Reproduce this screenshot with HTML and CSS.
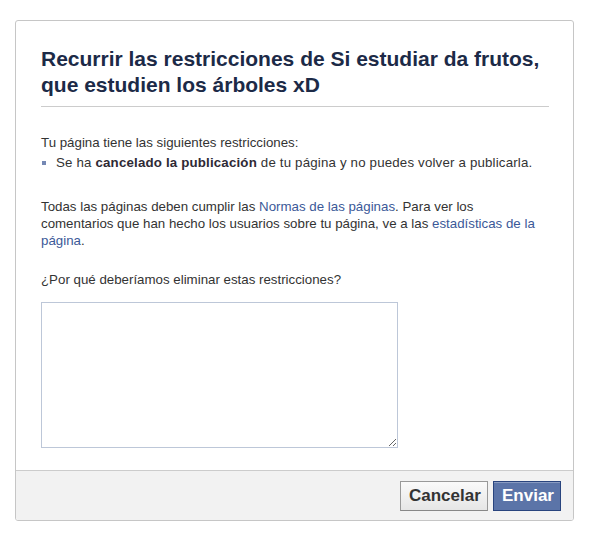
FILE: index.html
```html
<!DOCTYPE html>
<html lang="es">
<head>
<meta charset="utf-8">
<title>Recurrir restricciones</title>
<link rel="stylesheet" href="styles.css">
</head>
<body>
<div class="dialog">
  <div class="dialog-body">
    <h2 class="dialog-title">Recurrir las restricciones de Si estudiar da frutos, que estudien los árboles xD</h2>
    <p class="intro">Tu página tiene las siguientes restricciones:</p>
    <ul class="restrictions">
      <li>Se ha <b>cancelado la publicación</b> de tu página y no puedes volver a publicarla.</li>
    </ul>
    <p class="info">Todas las páginas deben cumplir las <a href="#">Normas de las páginas</a>. Para ver los comentarios que han hecho los usuarios sobre tu página, ve a las <a href="#">estadísticas de la página</a>.</p>
    <p class="question">¿Por qué deberíamos eliminar estas restricciones?</p>
    <textarea class="reason"></textarea>
  </div>
  <div class="dialog-footer">
    <button class="btn btn-cancel" type="button">Cancelar</button>
    <button class="btn btn-submit" type="button">Enviar</button>
  </div>
</div>
</body>
</html>
```
FILE: styles.css
```css
html, body {
  margin: 0;
  padding: 0;
  background: #ffffff;
}

body {
  font-family: "Liberation Sans", Arial, sans-serif;
  font-size: 13.3px;
  line-height: 17px;
  color: #333333;
}

.dialog {
  width: 557px;
  margin: 20px 0 0 15px;
  border: 1px solid #c6c6c6;
  border-radius: 3px;
  overflow: hidden;
  background: #ffffff;
}

.dialog-body {
  padding: 0 24px 0 25px;
}

.dialog-title {
  margin: 0;
  padding: 25px 0 8px;
  font-size: 21px;
  line-height: 26px;
  font-weight: bold;
  color: #1c2a47;
  border-bottom: 1px solid #cccccc;
}

.intro {
  margin: 27px 0 0;
}

.restrictions {
  list-style: none;
  margin: 3px 0 0;
  padding: 0;
}

.restrictions li {
  position: relative;
  padding-left: 15px;
  letter-spacing: 0.17px;
}

.restrictions li::before {
  content: "";
  position: absolute;
  left: 1px;
  top: 7px;
  width: 4px;
  height: 4px;
  background: #7588b4;
}

.restrictions b {
  color: #2f2a35;
}

.info {
  margin: 27px 0 0;
}

.info a {
  color: #3b5998;
  text-decoration: none;
}

.question {
  margin: 22px 0 0;
}

.reason {
  display: block;
  box-sizing: border-box;
  width: 357px;
  height: 146px;
  margin: 14px 0 22px;
  border: 1px solid #bdc7d8;
  padding: 3px;
  font-family: "Liberation Sans", Arial, sans-serif;
  font-size: 13px;
  background: #ffffff;
}

.dialog-footer {
  display: flex;
  justify-content: flex-end;
  gap: 5px;
  padding: 10px 12px 9px;
  background: #f2f2f2;
  border-top: 1px solid #cccccc;
}

.btn {
  box-sizing: border-box;
  height: 30px;
  margin: 0;
  padding: 0 8px;
  font-family: "Liberation Sans", Arial, sans-serif;
  font-size: 17px;
  font-weight: bold;
  line-height: 28px;
  border-radius: 0;
  cursor: pointer;
}

.btn-cancel {
  width: 88px;
  color: #333333;
  background: linear-gradient(#fafafa, #e6e6e6);
  border: 1px solid #999999;
  border-bottom-color: #888888;
}

.btn-submit {
  width: 68px;
  color: #ffffff;
  background: #5b74a8;
  border: 1px solid #29447e;
  box-shadow: inset 0 1px 0 #8a9cc2;
}
```
